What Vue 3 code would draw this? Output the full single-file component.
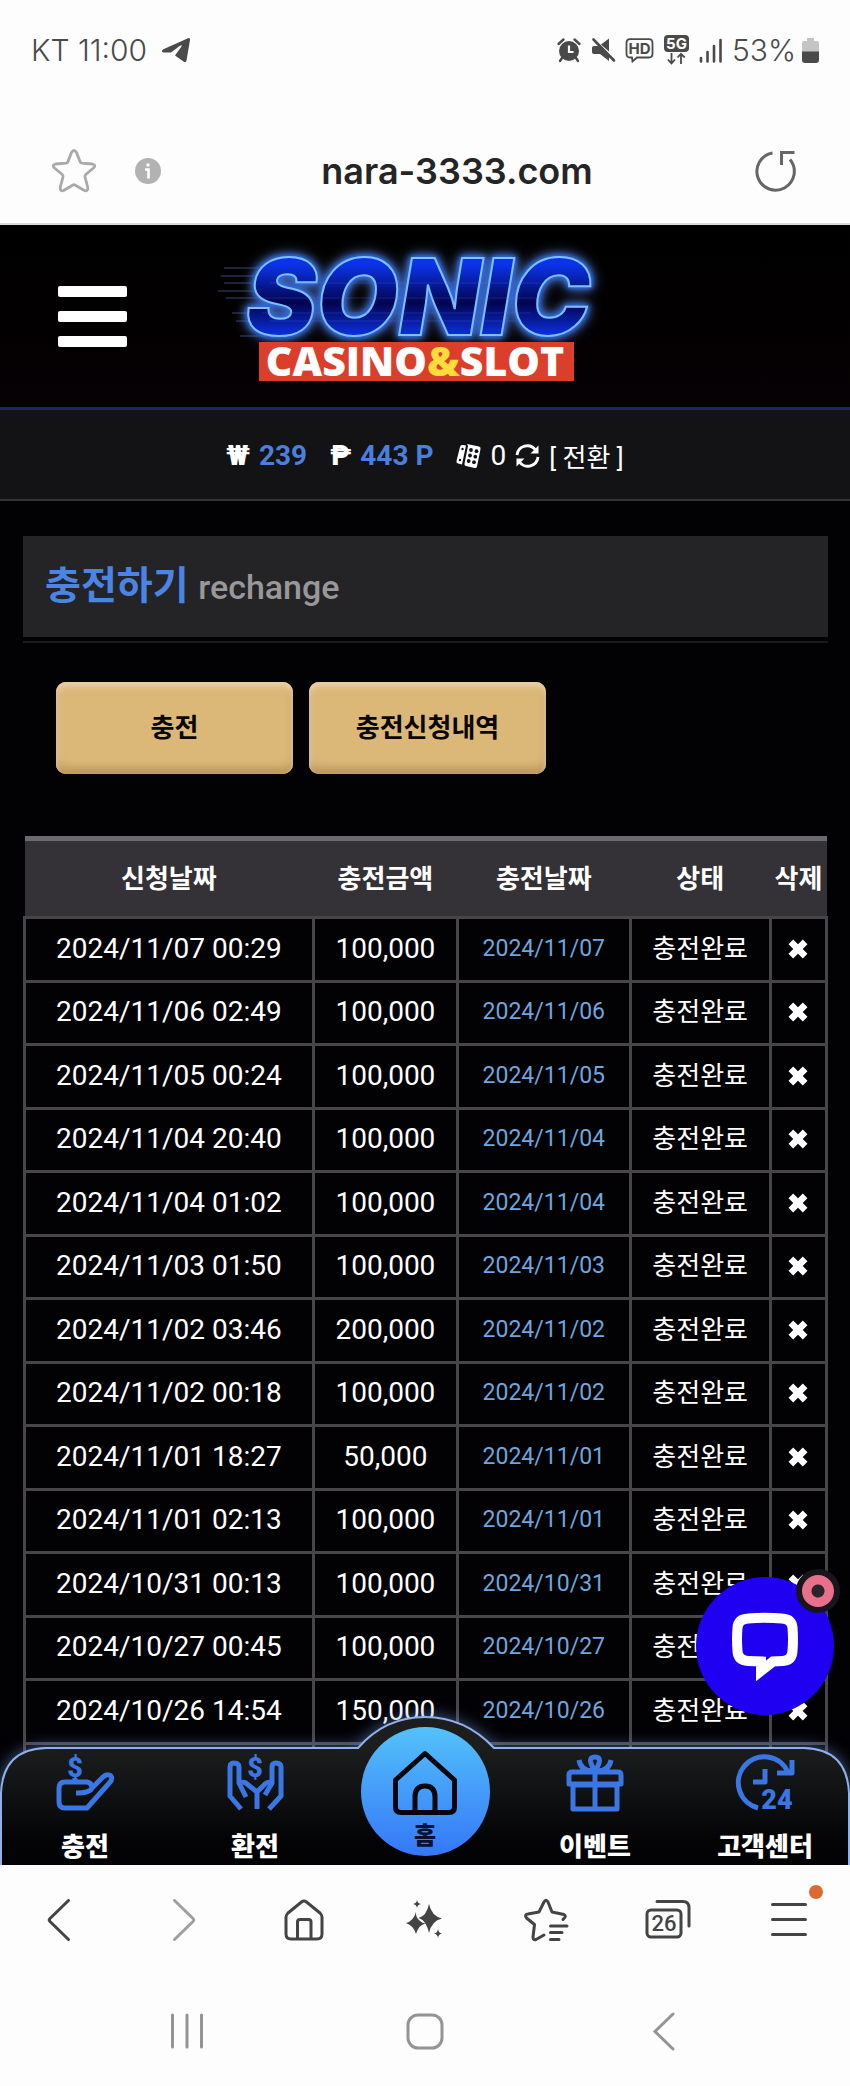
<script setup>
import { ref } from 'vue';

const address = ref('nara-3333.com');

const rows = [
  { requested: '2024/11/07 00:29', amount: '100,000', charged: '2024/11/07' },
  { requested: '2024/11/06 02:49', amount: '100,000', charged: '2024/11/06' },
  { requested: '2024/11/05 00:24', amount: '100,000', charged: '2024/11/05' },
  { requested: '2024/11/04 20:40', amount: '100,000', charged: '2024/11/04' },
  { requested: '2024/11/04 01:02', amount: '100,000', charged: '2024/11/04' },
  { requested: '2024/11/03 01:50', amount: '100,000', charged: '2024/11/03' },
  { requested: '2024/11/02 03:46', amount: '200,000', charged: '2024/11/02' },
  { requested: '2024/11/02 00:18', amount: '100,000', charged: '2024/11/02' },
  { requested: '2024/11/01 18:27', amount: '50,000', charged: '2024/11/01' },
  { requested: '2024/11/01 02:13', amount: '100,000', charged: '2024/11/01' },
  { requested: '2024/10/31 00:13', amount: '100,000', charged: '2024/10/31' },
  { requested: '2024/10/27 00:45', amount: '100,000', charged: '2024/10/27' },
  { requested: '2024/10/26 14:54', amount: '150,000', charged: '2024/10/26' },
];
</script>

<template>
  <div class="phone">
    <div class="status-bar">
      <div class="status-side status-carrier">
        <span>KT 11:00</span>
        <svg width="30" height="26" viewBox="0 0 30 26">
          <path d="M1 14.500C1 13 2 12.400 3.500 11.800L27 1.200Q29.500.500 29 3L25.500 23.500Q25 26 22.500 24.500L14 18.500L20.500 9.500Q21.300 7.500 19 8.700L10 15.500L3 15.500Q1 15.500 1 14.500Z" />
        </svg>
      </div>
      <div class="status-side status-icons">
        <svg width="24" height="24" viewBox="0 0 24 24">
          <path d="M1.500 6L6.500 1.500M22.500 6L17.500 1.500M5 20L3 23M19 20L21 23" fill="none" stroke="#4a4a4a" stroke-width="2.400" stroke-linecap="round" />
          <circle cx="12" cy="13" r="10" />
          <path d="M12 7.500V14H16.500" fill="none" stroke="#fff" stroke-width="2.200" />
        </svg>
        <svg width="24" height="24" viewBox="0 0 24 24">
          <path d="M1 10Q1 8 3 8H8L18 18V23L9 16H3Q1 16 1 14ZM10 6.500L18 0.500V13.500Z" />
          <path d="M2.500 1.500L23 22.500" stroke="#4a4a4a" stroke-width="2.600" stroke-linecap="round" />
        </svg>
        <svg width="29" height="25" viewBox="0 0 29 25">
          <path d="M5 1.200H24Q27.500 1.200 27.500 5V15.500Q27.500 19.500 24 19.500H12L7.500 23.500L7 19.500H5Q1.500 19.500 1.500 15.500V5Q1.500 1.200 5 1.200Z" fill="none" stroke="#4a4a4a" stroke-width="1.800" />
          <text x="14.500" y="16" text-anchor="middle" font-size="15" font-weight="700">HD</text>
        </svg>
        <svg width="25" height="30" viewBox="0 0 25 30">
          <rect x="0" y="0" width="25" height="17" rx="4" />
          <text x="12.500" y="14" text-anchor="middle" font-size="15" font-weight="700" fill="#fff">5G</text>
          <path d="M7.500 18V28M3.800 24.500L7.500 28.500L11 24.500M17 29V19M13.500 22.500L17 18.800L20.700 22.500" fill="none" stroke="#4a4a4a" stroke-width="1.800" />
        </svg>
        <svg width="23" height="25" viewBox="0 0 23 25">
          <path d="M2 20V23.500M8.500 14V23.500M15 8V23.500M21.500 2V23.500" stroke="#4a4a4a" stroke-width="2.600" stroke-linecap="round" />
        </svg>
        <span>53%</span>
        <svg class="battery" width="17" height="25" viewBox="0 0 17 25">
          <path d="M5 0H12V3H15Q17 3 17 5V14H0V5Q0 3 2 3H5Z" fill="#c4c4c4" />
          <path d="M0 13.500H17V22Q17 25 14 25H3Q0 25 0 22Z" />
        </svg>
      </div>
    </div>

    <div class="url-bar">
      <button type="button" class="plain" aria-label="북마크">
        <svg width="46" height="46" viewBox="0 0 46 46">
          <path d="M20.500 4.500Q23 .500 25.500 4.500L29 13.500Q29.500 15 31 15.200L41.500 16Q45.500 17 42.500 20L34.800 26.500Q33.800 27.500 34 29L36.800 39.500Q37 44 33 42.300L24 37Q23 36.500 22 37L13 42.300Q9 44 9.200 39.500L12 29Q12.200 27.500 11.200 26.500L3.500 20Q.500 17 4.500 16L15 15.200Q16.500 15 17 13.500Z" fill="none" stroke="#a9a9a9" stroke-width="2.800" stroke-linejoin="round" />
        </svg>
      </button>
      <button type="button" class="plain info" aria-label="사이트 정보">
        <svg width="26" height="26" viewBox="0 0 26 26">
          <circle cx="13" cy="13" r="13" fill="#b2b2b2" />
          <circle cx="13" cy="7" r="1.800" fill="#fff" />
          <path d="M10 11.500H13.500V20.500" fill="none" stroke="#fff" stroke-width="2.600" />
        </svg>
      </button>
      <input v-model="address" class="address" type="text" aria-label="주소" />
      <button type="button" class="plain" aria-label="새로고침">
        <svg width="42" height="42" viewBox="0 0 42 42">
          <path d="M17.500 3A18.700 18.700 0 1 0 35 9.500M26.500 15V2.500H39.500" fill="none" stroke="#666" stroke-width="3" />
        </svg>
      </button>
    </div>

    <main class="site">
      <header class="site-header">
        <button type="button" class="menu-toggle" aria-label="메뉴">
          <span></span>
          <span></span>
          <span></span>
        </button>
        <a href="#" class="logo" aria-label="SONIC CASINO&amp;SLOT">
          <svg width="400" height="160" viewBox="0 0 400 160">
            <defs>
              <linearGradient id="sonic" x1="0" y1="0" x2="0" y2="1">
                <stop offset="0.250" stop-color="#0b34ea" />
                <stop offset="0.550" stop-color="#02044e" />
                <stop offset="0.800" stop-color="#0b30e0" />
              </linearGradient>
            </defs>
            <path d="M14 32H60M11 40H60M14 47H60M8 55H60M16 62H60M22 77H60M26 85H60M30 100H60" stroke="#39456e" stroke-width="1" />
            <text x="36" y="99" class="logo-word" fill="url(#sonic)">SONIC</text>
            <path d="M60 47H330M52 62H330M52 77H320M60 85H310" stroke="#5a6cff" stroke-width="1" opacity="0.250" />
            <rect x="49" y="106" width="315" height="39" fill="#db3f2b" />
            <text x="205" y="140" text-anchor="middle" class="logo-sub">CASINO<tspan fill="#fddc3c">&amp;</tspan>SLOT</text>
          </svg>
        </a>
      </header>

      <div class="wallet">
        <span class="coin">₩</span>
        <strong>239</strong>
        <span class="coin point">₱</span>
        <strong>443 P</strong>
        <svg class="dice" width="25" height="26" viewBox="0 0 25 26">
          <path d="M11 1L23 3.500Q25 4 24.500 6L21 23.500Q20.500 25.500 18.500 25L10 23Q8 22.500 8.500 20.500L12 3ZM7 2L10 2.500L6 21.500L2 20.500Q0 20 .500 18L4 4Q4.500 1.500 7 2Z" fill="#fff" />
          <g fill="#131215">
            <circle cx="15" cy="7" r="1.900" />
            <circle cx="20.500" cy="8.200" r="1.900" />
            <circle cx="14" cy="12.500" r="1.900" />
            <circle cx="19.300" cy="13.700" r="1.900" />
            <circle cx="12.700" cy="18" r="1.900" />
            <circle cx="18" cy="19.200" r="1.900" />
            <circle cx="6.500" cy="6" r="1.200" />
            <circle cx="4" cy="17" r="1.200" />
          </g>
        </svg>
        <span>0</span>
        <svg width="25" height="24" viewBox="0 0 25 24">
          <path d="M2 11A10.300 10.300 0 0 1 20.500 6M23 13A10.300 10.300 0 0 1 4.500 18" fill="none" stroke="#fff" stroke-width="2.800" />
          <path d="M23.500 1.500V9.500H15.500ZM1.500 22.500V14.500H9.500Z" fill="#fff" />
        </svg>
        <a href="#" class="convert">[ 전환 ]</a>
      </div>

      <section class="content">
        <div class="title-wrap">
          <h1>충전하기 <small>rechange</small></h1>
        </div>

        <div class="actions">
          <button type="button">충전</button>
          <button type="button">충전신청내역</button>
        </div>

        <table class="history">
          <colgroup>
            <col class="col-requested" />
            <col class="col-amount" />
            <col class="col-charged" />
            <col class="col-state" />
            <col />
          </colgroup>
          <thead>
            <tr>
              <th>신청날짜</th>
              <th>충전금액</th>
              <th>충전날짜</th>
              <th>상태</th>
              <th>삭제</th>
            </tr>
          </thead>
          <tbody>
            <tr v-for="row in rows" :key="row.requested">
              <td>{{ row.requested }}</td>
              <td>{{ row.amount }}</td>
              <td class="charged">{{ row.charged }}</td>
              <td class="state">충전완료</td>
              <td>
                <button type="button" class="remove" aria-label="삭제">
                  <svg width="22" height="22" viewBox="0 0 20 20">
                    <path d="M3.500 3.500L16.500 16.500M16.500 3.500L3.500 16.500" stroke="#fff" stroke-width="6" />
                  </svg>
                </button>
              </td>
            </tr>
            <tr>
              <td v-for="n in 5" :key="n"></td>
            </tr>
          </tbody>
        </table>
      </section>

      <button type="button" class="chat" aria-label="채팅 상담">
        <svg width="66" height="66" viewBox="0 0 66 66">
          <path d="M16 5.500Q33 4 50 5.500Q60 6 60.500 15Q61.500 26 60.500 38Q60 47.500 51 48L41 48.500L29 58V48.500L16 48Q6 47.500 5.500 38Q4.500 26 5.500 15Q6 6 16 5.500Z" fill="none" stroke="#fff" stroke-width="10" />
        </svg>
        <span class="chat-badge"></span>
      </button>

      <nav class="tabs">
        <svg class="tabs-shape" viewBox="0 0 850 149" preserveAspectRatio="none">
          <defs>
            <linearGradient id="tabs-fill" x1="0" y1="0" x2="0" y2="1">
              <stop offset="0.200" stop-color="#1c1e1e" />
              <stop offset="0.850" stop-color="#030305" />
            </linearGradient>
          </defs>
          <path d="M1 150V77Q3 33 46 32H358Q385 1 425 1T494 32H804Q847 33 849 77V150" fill="url(#tabs-fill)" stroke="#8fb0ea" stroke-width="2" />
        </svg>
        <a href="#">
          <svg width="56" height="56" viewBox="0 0 56 56">
            <path d="M18 27V23M19 38Q33 38 35 33Q35 28 30 27H8Q2 27 2 33V47Q2 53 8 53H30L54 26Q56 21 52 20Q49 19 46 22L35 33" class="line" />
            <text x="18" y="22" text-anchor="middle">$</text>
          </svg>
          <span>충전</span>
        </a>
        <a href="#">
          <svg width="56" height="56" viewBox="0 0 56 56">
            <path d="M14 54L3 41V12Q3 8 7 8Q12 8 12 12V28L19 42M12 28Q18 26 20 29L30 37V54M30 37L38 29Q41 26 45 28V12Q45 8 49 8Q54 8 54 12V41L42 54M45 28L38 40" class="line" />
            <text x="28" y="22" text-anchor="middle">$</text>
          </svg>
          <span>환전</span>
        </a>
        <a href="#" class="home">
          <svg width="64" height="64" viewBox="0 0 64 64">
            <path d="M32 2.500L61.500 29V56Q61.500 61.500 56 61.500H8Q2.500 61.500 2.500 56V29ZM22 61V46Q22 35 32 35T42 46V61" fill="none" stroke="#03060d" stroke-width="5" stroke-linejoin="round" />
          </svg>
          <span>홈</span>
        </a>
        <a href="#">
          <svg width="56" height="56" viewBox="0 0 56 56">
            <path d="M6 30H50V54H6ZM2 20Q2 17 5 17H51Q54 17 54 20V29H2ZM28 17V54M28 16Q19 2 28 2T28 16Q14 17 12 5M28 16Q42 17 44 5" class="line" />
          </svg>
          <span>이벤트</span>
        </a>
        <a href="#">
          <svg width="56" height="56" viewBox="0 0 56 56">
            <path d="M21 53A26 26 0 1 1 51 17M55 5V18H40M28 14V27H16" class="line" />
            <text x="40" y="54" text-anchor="middle">24</text>
          </svg>
          <span>고객센터</span>
        </a>
      </nav>
    </main>

    <div class="toolbar">
      <button type="button" class="plain" aria-label="뒤로">
        <svg width="44" height="44" viewBox="0 0 44 44">
          <path d="M29.500 2.500L11 20.500Q9.500 22 11 23.500L29.500 41.500" class="stroke" />
        </svg>
      </button>
      <button type="button" class="plain faded" aria-label="앞으로">
        <svg width="44" height="44" viewBox="0 0 44 44">
          <path d="M14.500 2.500L33 20.500Q34.500 22 33 23.500L14.500 41.500" class="stroke" />
        </svg>
      </button>
      <button type="button" class="plain" aria-label="홈">
        <svg width="44" height="44" viewBox="0 0 44 44">
          <path d="M19.500 4Q22 2 24.500 4L38 15Q40 17 40 19V36Q40 41 35 41H9Q4 41 4 36V19Q4 17 6 15ZM15.500 41V24Q15.500 21.500 18 21.500H26.500Q29 21.500 29 24V41" class="stroke" />
        </svg>
      </button>
      <button type="button" class="plain" aria-label="AI">
        <svg width="44" height="44" viewBox="0 0 44 44">
          <path d="M26 6Q28.500 18 39 20.500Q28.500 23 26 35Q24 26 19.500 22Q17 20.500 15.500 20Q23.500 18 26 6Z" fill="#444" />
          <path d="M13 14Q12.500 19.500 17 23Q19.500 25 22.500 25.500Q15.500 27 13 36Q10.500 27.500 3 25Q10.500 23 13 14Z" fill="#444" />
          <path d="M14 2Q14.500 5.500 18 6Q14.500 6.500 14 10Q13.500 6.500 10 6Q13.500 5.500 14 2ZM35 31Q35.500 35 39 35.500Q35.500 36 35 40Q34.500 36 31 35.500Q34.500 35 35 31Z" fill="#444" />
        </svg>
      </button>
      <button type="button" class="plain" aria-label="북마크 목록">
        <svg width="44" height="44" viewBox="0 0 44 44">
          <path d="M20 37L12 41.500Q9 42.500 9 39L10.500 26.500L2.500 20Q0 16.500 4 16L15 14L20 4Q22 .500 24 4L28 14L40 16.500Q43 18 39 21.500M26.500 28H43M26.500 34.500H38M26.500 41.500H35" class="stroke" />
        </svg>
      </button>
      <button type="button" class="plain" aria-label="탭">
        <svg width="48" height="44" viewBox="0 0 48 44">
          <rect x="3" y="12" width="34" height="27" rx="4" class="stroke" />
          <path d="M13 3.500H39Q45 3.500 45 10V28" class="stroke" />
          <text x="20" y="33" text-anchor="middle" font-size="22" font-weight="500" fill="#444">26</text>
        </svg>
      </button>
      <button type="button" class="plain has-dot" aria-label="더보기">
        <svg width="44" height="44" viewBox="0 0 44 44">
          <path d="M5.500 6.500H38.500M5.500 21.500H38.500M5.500 36.500H38.500" class="stroke" />
        </svg>
      </button>
    </div>

    <div class="system-nav">
      <button type="button" class="plain" aria-label="최근 앱">
        <svg width="40" height="40" viewBox="0 0 40 40">
          <path d="M5.500 4V36M20 4V36M34.500 4V36" class="thin" />
        </svg>
      </button>
      <button type="button" class="plain" aria-label="홈 화면">
        <svg width="40" height="40" viewBox="0 0 40 40">
          <rect x="3" y="4" width="34" height="33" rx="10" class="thin" />
        </svg>
      </button>
      <button type="button" class="plain" aria-label="뒤로 가기">
        <svg width="40" height="40" viewBox="0 0 40 40">
          <path d="M30 3L12 20.500L30 38" class="thin" />
        </svg>
      </button>
    </div>
  </div>
</template>

<style>
body {
  margin: 0;
  background: #fdfdfd;
}
</style>

<style scoped>
* {
  box-sizing: border-box;
}

.phone {
  display: flex;
  flex-direction: column;
  height: 100vh;
  font-family: Roboto, 'Noto Sans CJK KR', sans-serif;
  background: #fdfdfd;
}

svg {
  display: block;
  flex: none;
  overflow: visible;
}

button {
  font: inherit;
  cursor: pointer;
}

a {
  color: inherit;
  text-decoration: none;
}

.plain {
  position: relative;
  padding: 0;
  border: 0;
  background: none;
}

/* phone status bar */
.status-bar {
  display: flex;
  flex: none;
  align-items: center;
  justify-content: space-between;
  height: 100px;
  padding: 0 31px;
  color: #4a4a4a;
  font-family: Inter, sans-serif;
  font-size: 30px;
  font-weight: 300;
}

.status-side {
  display: flex;
  align-items: center;
  gap: 10px;
}

.status-carrier {
  gap: 14px;
}

.status-side svg {
  fill: #4a4a4a;
}

.status-icons .battery {
  margin-left: -4px;
}

/* browser address bar */
.url-bar {
  display: flex;
  flex: none;
  align-items: center;
  height: 125px;
  padding: 19px 53px 0 51px;
  border-bottom: 2px solid #dcdcdc;
}

.info {
  margin-left: 38px;
}

.address {
  flex: 1;
  min-width: 0;
  padding: 0 2px 0 0;
  border: 0;
  outline: 0;
  background: none;
  color: #252525;
  font-family: Inter, sans-serif;
  font-size: 36px;
  font-weight: 600;
  text-align: center;
}

/* site */
.site {
  position: relative;
  flex: 1;
  min-height: 0;
  overflow: hidden;
  background: #020104;
  color: #fff;
}

.site-header {
  display: flex;
  align-items: center;
  gap: 83px;
  height: 185px;
  padding: 0 58px;
  border-bottom: 3px solid #20275e;
  background: linear-gradient(#000, #060104);
}

.menu-toggle {
  display: grid;
  gap: 14px;
  width: 69px;
  padding: 0;
  border: 0;
  background: none;
}

.menu-toggle span {
  height: 11px;
  border-radius: 2px;
  background: #fff;
}

.logo-word {
  stroke: #7cc0ff;
  stroke-width: 2;
  font-family: Inter, sans-serif;
  font-size: 106px;
  font-style: italic;
  font-weight: 900;
  filter: drop-shadow(0 0 2px #2f6ae6) drop-shadow(0 0 3px #2f6ae6) drop-shadow(0 0 6px #4a6cb4);
}

.logo-sub {
  fill: #fff;
  font-family: 'Open Sans', sans-serif;
  font-size: 41px;
  font-weight: 800;
}

.wallet {
  display: flex;
  align-items: center;
  justify-content: center;
  gap: 9px;
  height: 91px;
  padding-top: 2px;
  border-bottom: 2px solid #343336;
  background: #131215;
  font-size: 28px;
}

.wallet strong {
  color: #4a80dc;
  font-weight: 700;
}

.coin {
  font-weight: 900;
}

.point,
.dice {
  margin-left: 14px;
}

.convert {
  font-size: 26px;
}

.content {
  padding: 35px 22px 0 23px;
}

.title-wrap {
  padding-bottom: 4px;
  border-bottom: 2px solid #1a191b;
}

h1 {
  margin: 0;
  padding: 0 22px;
  background: #242326;
  color: #4a84e4;
  font-size: 39px;
  font-weight: 700;
  line-height: 100px;
}

h1 small {
  color: #98979a;
  font-size: 34px;
  font-weight: 500;
}

.actions {
  display: flex;
  gap: 16px;
  padding: 39px 33px 62px;
}

.actions button {
  width: 237px;
  height: 92px;
  padding: 0 0 6px;
  border: 0;
  border-radius: 10px;
  background: #dbb878;
  box-shadow: inset 0 4px 6px #ecd0a8, inset 0 -6px 8px #b8935a, inset 3px 0 6px #e6c898;
  color: #0a0606;
  font-size: 26px;
  font-weight: 700;
}

.history {
  width: 100%;
  border-collapse: collapse;
  table-layout: fixed;
  text-align: center;
}

.col-requested {
  width: 36%;
}

.col-amount {
  width: 18%;
}

.col-charged {
  width: 21.5%;
}

.col-state {
  width: 17.5%;
}

.history th {
  height: 79px;
  padding: 0 0 4px;
  border-top: 5px solid #6b6a6c;
  background: #343236;
  font-size: 26px;
  font-weight: 700;
  white-space: nowrap;
}

.history td {
  height: 63px;
  padding: 0 0 2px;
  border: 3px solid #474548;
  font-size: 28px;
  line-height: 32px;
}

.history tr:nth-child(odd) td {
  height: 64px;
}

.history .charged {
  color: #6ea6de;
  font-size: 23px;
}

.history .state {
  font-size: 26px;
}

.remove {
  display: block;
  margin: 0 auto;
  padding: 0;
  border: 0;
  background: none;
}

/* live chat bubble */
.chat {
  position: absolute;
  right: 16px;
  bottom: 150px;
  display: grid;
  place-items: center;
  width: 138px;
  height: 138px;
  padding: 0;
  border: 0;
  border-radius: 50%;
  background: #2000f0;
}

.chat-badge {
  position: absolute;
  top: -8px;
  right: -6px;
  width: 44px;
  height: 44px;
  border: 6px solid #18161c;
  border-radius: 50%;
  background: radial-gradient(circle, #2c2428 6px, #e8708a 7px);
}

/* site tab bar */
.tabs {
  position: absolute;
  right: 0;
  bottom: 0;
  left: 0;
  display: grid;
  grid-template-columns: repeat(5, 1fr);
  height: 117px;
}

.tabs-shape {
  position: absolute;
  bottom: 0;
  left: 0;
  width: 100%;
  height: 149px;
  filter: drop-shadow(0 0 8px rgba(110, 150, 220, 0.6));
}

.tabs a {
  position: relative;
  display: flex;
  flex-direction: column;
  align-items: center;
  gap: 18px;
  padding-top: 7px;
  font-size: 26px;
  font-weight: 900;
  line-height: 36px;
}

.tabs text {
  fill: #3a76e4;
  font-size: 27px;
  font-weight: 900;
}

.line {
  fill: none;
  stroke: #3a76e4;
  stroke-width: 5;
  stroke-linejoin: round;
}

.tabs .home {
  justify-self: center;
  gap: 6px;
  width: 129px;
  height: 129px;
  margin-top: -21px;
  padding-top: 24px;
  border-radius: 50%;
  background: linear-gradient(#54c2fa, #3477f8);
  color: #061230;
  font-size: 24px;
  line-height: 30px;
}

/* browser toolbar */
.toolbar {
  display: grid;
  flex: none;
  grid-template-columns: repeat(7, 1fr);
  place-items: center;
  height: 110px;
}

.stroke {
  fill: none;
  stroke: #444;
  stroke-width: 3;
  stroke-linecap: round;
  stroke-linejoin: round;
}

.faded {
  opacity: 0.5;
}

.has-dot::after {
  position: absolute;
  top: -13px;
  right: -12px;
  width: 14px;
  height: 14px;
  border-radius: 50%;
  background: #dc6834;
  content: '';
}

.system-nav {
  display: grid;
  flex: none;
  grid-template-columns: repeat(3, 1fr);
  place-items: center;
  height: 111px;
  padding: 0 8%;
}

.thin {
  fill: none;
  stroke: #949496;
  stroke-width: 3;
  stroke-linecap: round;
}
</style>
